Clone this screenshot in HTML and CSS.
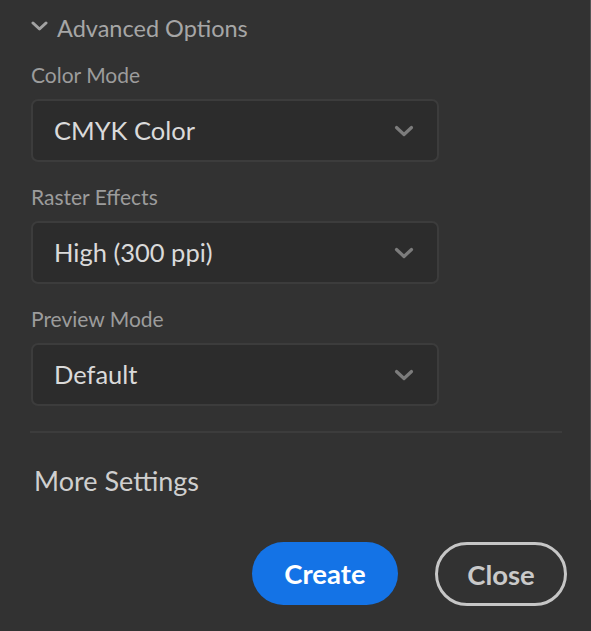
FILE: index.html
```html
<!DOCTYPE html>
<html>
<head>
<meta charset="utf-8">
<link rel="stylesheet" href="styles.css">
</head>
<body>
<div class="panel">
  <div class="section-head">
    <svg class="head-chev" width="17" height="10" viewBox="0 0 17 10"><path d="M2 2 L8.5 8 L15 2" fill="none" stroke="#a2a2a2" stroke-width="3" stroke-linecap="round" stroke-linejoin="round"/></svg>
    <span>Advanced Options</span>
  </div>

  <div class="field first">
    <div class="label">Color Mode</div>
    <div class="select">
      <span class="value">CMYK Color</span>
      <svg class="sel-chev" width="20" height="12" viewBox="0 0 20 12"><path d="M2.5 2.5 L10 9.5 L17.5 2.5" fill="none" stroke="#7c7c7c" stroke-width="3.2" stroke-linecap="round" stroke-linejoin="round"/></svg>
    </div>
  </div>

  <div class="field">
    <div class="label">Raster Effects</div>
    <div class="select">
      <span class="value">High (300 ppi)</span>
      <svg class="sel-chev" width="20" height="12" viewBox="0 0 20 12"><path d="M2.5 2.5 L10 9.5 L17.5 2.5" fill="none" stroke="#7c7c7c" stroke-width="3.2" stroke-linecap="round" stroke-linejoin="round"/></svg>
    </div>
  </div>

  <div class="field">
    <div class="label">Preview Mode</div>
    <div class="select">
      <span class="value">Default</span>
      <svg class="sel-chev" width="20" height="12" viewBox="0 0 20 12"><path d="M2.5 2.5 L10 9.5 L17.5 2.5" fill="none" stroke="#7c7c7c" stroke-width="3.2" stroke-linecap="round" stroke-linejoin="round"/></svg>
    </div>
  </div>

  <div class="divider"></div>

  <div class="more">More Settings</div>

  <div class="actions">
    <button class="btn primary">Create</button>
    <button class="btn secondary">Close</button>
  </div>
</div>
<div class="scrollbar"></div>
</body>
</html>
```

FILE: styles.css
```css
html, body {
  margin: 0;
  padding: 0;
  background: #323232;
  width: 591px;
  height: 631px;
  overflow: hidden;
}
body {
  position: relative;
  font-family: "Lato", "Open Sans", sans-serif;
}
.panel {
  padding: 12px 29px 0 31px;
}
.section-head {
  display: flex;
  align-items: center;
  height: 32px;
  color: #a6a6a6;
  font-size: 23.5px;
  line-height: 32px;
}
.head-chev {
  margin: -4px 9px 0 0;
}
.field {
  margin-top: 22px;
  width: 408px;
}
.field.first {
  margin-top: 18px;
}
.label {
  font-size: 21px;
  line-height: 26px;
  color: #9c9c9c;
  margin-bottom: 11px;
}
.select {
  box-sizing: border-box;
  height: 63px;
  border: 2px solid #3c3c3c;
  border-radius: 7px;
  background: #2c2c2c;
  display: flex;
  align-items: center;
  justify-content: space-between;
  padding: 0 23px 0 21px;
}
.value {
  font-size: 25.5px;
  color: #dadada;
  line-height: 30px;
  margin-top: -2px;
}
.sel-chev {
  margin-top: 1px;
}
.divider {
  margin-top: 25px;
  height: 2px;
  background: #3c3c3c;
  margin-left: -1px;
}
.more {
  margin-top: 32px;
  margin-left: 3px;
  font-size: 27px;
  line-height: 32px;
  color: #cfcfcf;
}
.actions {
  margin-top: 45px;
  display: flex;
  justify-content: flex-end;
  gap: 37px;
  margin-right: -5px;
}
.btn {
  box-sizing: border-box;
  height: 64px;
  border-radius: 32px;
  font-family: "Lato", "Open Sans", sans-serif;
  font-weight: 700;
  font-size: 27.5px;
  padding: 0;
  cursor: pointer;
}
.primary {
  width: 146px;
  height: 63px;
  background: #1473e6;
  color: #ffffff;
  border: none;
}
.secondary {
  width: 132px;
  background: transparent;
  color: #c9c9c9;
  border: 3px solid #c6c6c6;
}
.scrollbar {
  position: absolute;
  right: 0;
  top: 0;
  width: 1px;
  height: 500px;
  background: #555555;
}
```
